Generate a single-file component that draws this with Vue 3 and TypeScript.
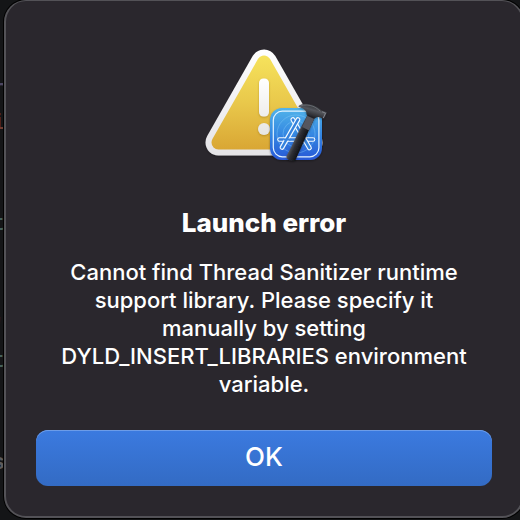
<script setup lang="ts">
import { ref } from 'vue'

interface Fragment {
  char: string
  tone: string
  top: number
}

const title = 'Launch error'
const message =
  'Cannot find Thread Sanitizer runtime support library. Please specify it manually by setting DYLD_INSERT_LIBRARIES environment variable.'

const fragments: Fragment[] = [
  { char: 'r', tone: 'violet', top: 77 },
  { char: 'i', tone: 'rust', top: 111 },
  { char: 't', tone: 'teal', top: 212 },
  { char: "'", tone: 'red', top: 315 },
  { char: 't', tone: 'teal', top: 349 },
  { char: 's', tone: 'grey', top: 451 },
]

const open = ref(true)
</script>

<template>
  <main class="desktop">
    <div class="editor" aria-hidden="true">
      <span
        v-for="f in fragments"
        :key="f.top"
        class="fragment"
        :class="f.tone"
        :style="{ top: f.top + 'px' }"
      >{{ f.char }}</span>
    </div>

    <section
      v-if="open"
      class="dialog"
      role="alertdialog"
      aria-labelledby="alert-title"
      aria-describedby="alert-message"
    >
      <svg class="icon" viewBox="200 44 128 128" aria-hidden="true">
        <defs>
          <linearGradient id="rim" x1="0" y1="49" x2="0" y2="156" gradientUnits="userSpaceOnUse">
            <stop offset="0" stop-color="#ffffff" />
            <stop offset="1" stop-color="#e4e3e6" />
          </linearGradient>
          <linearGradient id="gold" x1="0" y1="55" x2="0" y2="150" gradientUnits="userSpaceOnUse">
            <stop offset="0" stop-color="#f6e35c" />
            <stop offset="0.5" stop-color="#e9c84b" />
            <stop offset="1" stop-color="#d9a634" />
          </linearGradient>
          <linearGradient id="mark" x1="0" y1="78" x2="0" y2="136" gradientUnits="userSpaceOnUse">
            <stop offset="0" stop-color="#ffffff" />
            <stop offset="1" stop-color="#e6e5e2" />
          </linearGradient>
          <linearGradient id="tile" x1="0" y1="108" x2="0" y2="160" gradientUnits="userSpaceOnUse">
            <stop offset="0" stop-color="#52b4ea" />
            <stop offset="0.5" stop-color="#3488e2" />
            <stop offset="1" stop-color="#2858d6" />
          </linearGradient>
          <linearGradient id="handle" x1="296" y1="134" x2="305" y2="138" gradientUnits="userSpaceOnUse">
            <stop offset="0" stop-color="#5a5c64" />
            <stop offset="0.4" stop-color="#2f3036" />
            <stop offset="1" stop-color="#131418" />
          </linearGradient>
          <linearGradient id="head" x1="312" y1="103" x2="308" y2="117" gradientUnits="userSpaceOnUse">
            <stop offset="0" stop-color="#26272b" />
            <stop offset="0.45" stop-color="#54565c" />
            <stop offset="1" stop-color="#1b1c20" />
          </linearGradient>
          <filter id="soft" x="-20%" y="-20%" width="140%" height="150%">
            <feDropShadow dx="0" dy="1" stdDeviation="1" flood-color="#000" flood-opacity="0.35" />
          </filter>
          <filter id="faint" x="-40%" y="-20%" width="180%" height="150%">
            <feDropShadow dx="0" dy="1" stdDeviation="0.8" flood-color="#7a5600" flood-opacity="0.4" />
          </filter>
        </defs>

        <g stroke-linejoin="round">
          <path d="M264 62.5 309.5 142.5H218.5Z" fill="url(#rim)" stroke="url(#rim)" stroke-width="26" filter="url(#soft)" />
          <path d="M264 62.5 309.5 142.5H218.5Z" fill="url(#gold)" stroke="url(#gold)" stroke-width="14" />
        </g>
        <g fill="url(#mark)" filter="url(#faint)">
          <rect x="259" y="78.5" width="10" height="38" rx="4.5" />
          <circle cx="264" cy="129" r="6" />
        </g>

        <rect x="270" y="108" width="52" height="52" rx="12" fill="url(#tile)" filter="url(#soft)" />
        <rect x="273.3" y="111.2" width="45.6" height="45.6" rx="9" fill="none" stroke="#e4f4ff" stroke-width="1.2" />
        <g fill="none" stroke="#8bd0fa" stroke-width="0.7" opacity="0.55">
          <circle cx="296" cy="134" r="19" />
          <circle cx="296" cy="134" r="13" />
        </g>
        <g fill="none" stroke-linecap="round">
          <path d="M279.5 139.5H313" stroke="#f3faff" stroke-width="4.6" />
          <path d="M279.5 139.5H313" stroke="#367fdc" stroke-width="2.4" />
          <path d="M292.8 119.5 309.5 148" stroke="#f3faff" stroke-width="4.8" />
          <path d="M292.8 119.5 309.5 148" stroke="#3582dd" stroke-width="2.5" />
          <path d="M298 119.5 282 147.5" stroke="#f3faff" stroke-width="4.8" />
          <path d="M298 119.5 282 147.5" stroke="#3582dd" stroke-width="2.5" />
          <path d="M284.5 139.5H290" stroke="#3582dd" stroke-width="2.2" />
        </g>

        <g filter="url(#soft)">
          <path d="M308.5 113 315.5 116 304 141 295.5 160C294.4 162.5 286.8 160.5 286.4 157 286.3 155.8 289 151.8 291 147.5L299.5 130Z" fill="url(#handle)" />
          <path d="M308.5 113 315.5 116 309 130.5 302.2 127Z" fill="#55575e" />
          <path d="M308.5 113 315.5 116 314.2 119 307.2 115.8Z" fill="#202126" />
          <path d="M298.3 106.6C300.5 103.5 307 103 312.5 104.7 315.8 105.6 319.3 108.2 321.5 110.6L326.8 112.2 323.8 119.2 319.2 117C317.5 116.7 316.5 117.4 315 118.1L306.4 114.5C307.2 110.6 303.5 108.3 298.3 106.6Z" fill="url(#head)" />
          <path d="M300 106.1C304.5 104.2 309.5 105 313 106.3 316 107.4 318.4 109.5 320.3 111.3" fill="none" stroke="#7c7e85" stroke-width="0.7" />
          <path d="M322.1 111.8 325.5 113.1 323.3 118" fill="none" stroke="#83858c" stroke-width="1" />
        </g>
      </svg>

      <h1 id="alert-title" class="title">{{ title }}</h1>
      <p id="alert-message" class="message">{{ message }}</p>
      <button class="confirm" type="button" @click="open = false">OK</button>
    </section>
  </main>
</template>

<style>
body {
  margin: 0;
  background: #141517;
}
</style>

<style scoped>
.desktop {
  position: relative;
  box-sizing: border-box;
  min-height: 100vh;
  padding: 0 0 2px 4px;
  overflow: hidden;
  background: #141517;
  font-family: Inter, "Liberation Sans", sans-serif;
}

.editor {
  position: absolute;
  top: 0;
  bottom: 0;
  left: 0;
  width: 4px;
  overflow: hidden;
}

.fragment {
  position: absolute;
  right: -1px;
  font: 22px/26px "Liberation Mono", monospace;
  font-weight: 700;
}

.violet { color: #4d4763; }
.rust { color: #703b30; }
.teal { color: #45605c; }
.red { color: #7a302e; }
.grey { color: #5b5b5d; }

.dialog {
  position: relative;
  display: flex;
  flex-direction: column;
  align-items: center;
  box-sizing: border-box;
  margin-right: -4px;
  padding: 43px 30px 30px;
  border: 2px solid #535257;
  border-top-width: 1px;
  border-radius: 22px;
  background: #2a272d;
  box-shadow: 0 0 0 1px #000;
  color: #fff;
  text-align: center;
}

.icon {
  display: block;
  width: 128px;
  height: 128px;
}

.title {
  margin: 35px 0 0;
  font-size: 26px;
  font-weight: 800;
  line-height: 32px;
}

.message {
  max-width: 416px;
  margin: 19px 0 0;
  font-size: 22px;
  font-weight: 500;
  line-height: 28px;
}

.confirm {
  align-self: stretch;
  height: 56px;
  margin: 32px 0 0;
  padding: 0 0 2px;
  border: 0;
  border-radius: 12px;
  background: linear-gradient(#3b7ae0, #336bc4);
  box-shadow: inset 0 1px 0 #6c9ce8;
  color: #fff;
  font: 500 26px/32px Inter, "Liberation Sans", sans-serif;
}
</style>
